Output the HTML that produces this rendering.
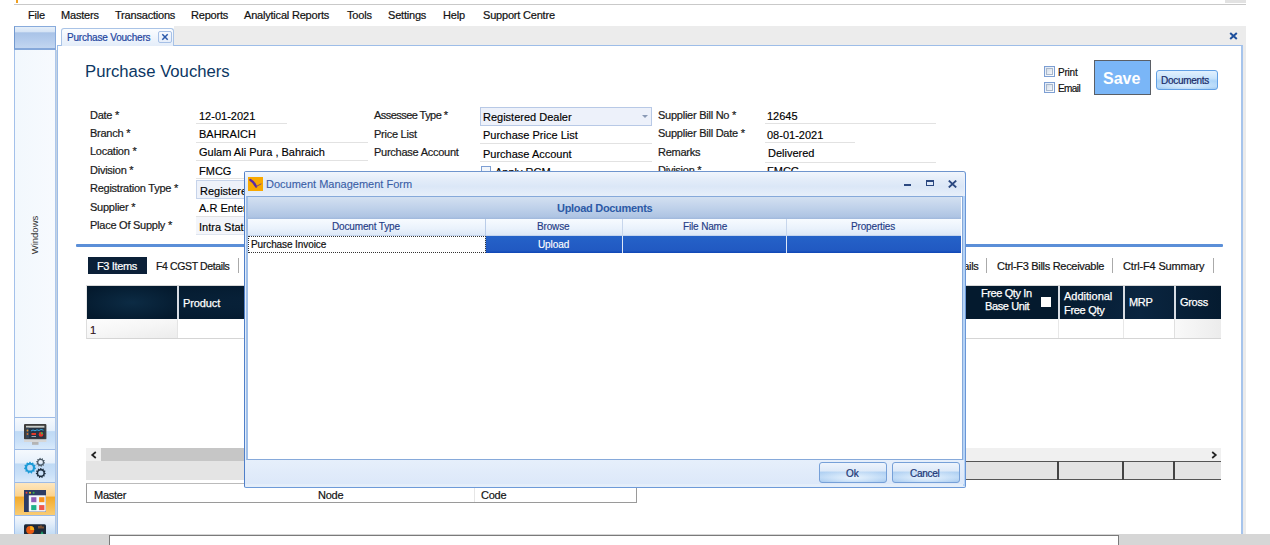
<!DOCTYPE html>
<html><head><meta charset="utf-8">
<style>
*{margin:0;padding:0;box-sizing:border-box}
html,body{width:1270px;height:545px;overflow:hidden;background:#fff}
body{position:relative;font-family:"Liberation Sans",sans-serif;color:#111}
.a{position:absolute;white-space:nowrap}
.t{position:absolute;white-space:nowrap;font-size:11px;line-height:13px}
.menu{font-size:11px;letter-spacing:-0.2px;color:#111;line-height:13px;top:9px;-webkit-text-stroke:0.2px #111}
.lbl{font-size:11px;letter-spacing:-0.25px;color:#1a1a1a;line-height:13px;margin-top:1px;-webkit-text-stroke:0.2px #1a1a1a}
.val{font-size:11px;color:#000;line-height:13px;margin-top:1px;-webkit-text-stroke:0.15px #000}
.ul{position:absolute;height:1px;background:#e2e2e2}
</style></head><body>

<!-- top strip -->
<div class="a" style="left:14px;top:4px;width:1232px;height:1px;background:#c9c9c9"></div>
<div class="a" style="left:16px;top:0;width:2px;height:3px;background:#f0a020"></div>
<div class="a" style="left:1225px;top:0;width:21px;height:3px;background:#e2e2e2"></div>

<!-- menu -->
<div class="t menu" style="left:28px">File</div>
<div class="t menu" style="left:61px">Masters</div>
<div class="t menu" style="left:115px">Transactions</div>
<div class="t menu" style="left:191px">Reports</div>
<div class="t menu" style="left:244px">Analytical Reports</div>
<div class="t menu" style="left:347px">Tools</div>
<div class="t menu" style="left:388px">Settings</div>
<div class="t menu" style="left:443px">Help</div>
<div class="t menu" style="left:483px">Support Centre</div>

<!-- tab strip -->
<div class="a" style="left:174px;top:26px;width:1072px;height:20px;background:#ececec"></div>
<svg class="a" style="left:1229px;top:32px" width="9" height="8" viewBox="0 0 9 8"><path d="M1.2 1 L7.8 7 M7.8 1 L1.2 7" stroke="#1d4f9c" stroke-width="2"/></svg>

<!-- sidebar -->
<div class="a" style="left:14px;top:26px;width:42px;height:508px;background:linear-gradient(90deg,#f2f8fd,#f7fafe);border-left:1px solid #a4c1ea;border-right:1px solid #aec7ea"></div>
<div class="a" style="left:14px;top:26px;width:42px;height:24px;background:linear-gradient(#e6eff9,#d6e4f5 22%,#a9c3e7 28%,#b3cbec 60%,#c2d6f0);border:1px solid #88abdc;border-left-color:#7299d0;border-bottom:2px solid #85a8da"></div>
<div class="a" style="left:10px;top:229px;width:50px;font-size:9.5px;line-height:12px;color:#333;transform:rotate(-90deg);transform-origin:center;text-align:center">Windows</div>

<!-- content frame -->
<div class="a" style="left:57px;top:45px;width:1186px;height:489px;border:1px solid #9dbde8;border-right:2px solid #a6c4ec;border-bottom:none;background:#fff"></div>
<div class="a" style="left:1243px;top:46px;width:3px;height:488px;background:#ebebeb"></div>
<div class="a" style="left:56px;top:50px;width:1px;height:484px;background:#c5d3e2"></div>

<!-- doc tab -->
<div class="a" style="left:61px;top:28px;width:113px;height:18px;background:linear-gradient(#fbfdff,#e4edf9);border:1px solid #a9c3e6;border-bottom:none;border-radius:3px 3px 0 0"></div>
<div class="t" style="left:67px;top:31px;font-size:10px;color:#1f46a0;letter-spacing:-0.2px;-webkit-text-stroke:0.2px #1f46a0">Purchase Vouchers</div>
<div class="a" style="left:158px;top:31px;width:14px;height:12px;border:1px solid #a6c0e6;background:linear-gradient(#f6f9fe,#e6eefa);border-radius:2px"></div>
<svg class="a" style="left:158px;top:31px" width="14" height="12" viewBox="0 0 14 12"><path d="M4.3 3.3 L9.7 8.7 M9.7 3.3 L4.3 8.7" stroke="#2a58aa" stroke-width="1.5"/></svg>


<!-- title -->
<div class="a" style="left:85px;top:62px;font-size:16.7px;line-height:19px;color:#0c3763">Purchase Vouchers</div>

<!-- print/email/save/documents -->
<div class="a" style="left:1044px;top:66px;width:11px;height:11px;border:1px solid #7d9fd3;background:linear-gradient(135deg,#dfe8f5,#fff)"><div class="a" style="left:1px;top:1px;width:7px;height:7px;border:1px solid #a9b8cc;background:linear-gradient(135deg,#d5dde8,#f4f7fb)"></div></div>
<div class="t" style="left:1058px;top:66px;font-size:10px;letter-spacing:-0.2px;color:#111;-webkit-text-stroke:0.2px #111">Print</div>
<div class="a" style="left:1044px;top:82px;width:11px;height:11px;border:1px solid #7d9fd3;background:linear-gradient(135deg,#dfe8f5,#fff)"><div class="a" style="left:1px;top:1px;width:7px;height:7px;border:1px solid #a9b8cc;background:linear-gradient(135deg,#d5dde8,#f4f7fb)"></div></div>
<div class="t" style="left:1058px;top:82px;font-size:10px;letter-spacing:-0.6px;color:#111;-webkit-text-stroke:0.2px #111">Email</div>
<div class="a" style="left:1094px;top:60px;width:57px;height:35px;background:#7ab6f7;border:1px solid #5a5f66"></div>
<div class="a" style="left:1103px;top:69px;font-size:16px;line-height:19px;font-weight:bold;color:#fff">Save</div>
<div class="a" style="left:1156px;top:70px;width:62px;height:20px;border:1px solid #62a0e4;border-radius:3px;background:radial-gradient(ellipse 55% 40% at 50% 80%,rgba(230,245,255,0.8),rgba(230,245,255,0)),linear-gradient(#e2f1fe,#c9e4fc 40%,#acd4f8 55%,#b4d8f9 85%,#9dcaf3)"></div>
<div class="t" style="left:1161px;top:74px;font-size:10px;letter-spacing:-0.3px;color:#1a2a66;-webkit-text-stroke:0.2px #1a2a66">Documents</div>

<!-- labels col1 -->
<div class="t lbl" style="left:90px;top:108px">Date *</div>
<div class="t lbl" style="left:90px;top:126px">Branch *</div>
<div class="t lbl" style="left:90px;top:144px">Location *</div>
<div class="t lbl" style="left:90px;top:163px">Division *</div>
<div class="t lbl" style="left:90px;top:181px">Registration Type *</div>
<div class="t lbl" style="left:90px;top:200px">Supplier *</div>
<div class="t lbl" style="left:90px;top:218px">Place Of Supply *</div>

<!-- values col1 -->
<div class="t val" style="left:199px;top:109px">12-01-2021</div>
<div class="ul" style="left:196px;top:123px;width:91px"></div>
<div class="t val" style="left:199px;top:127px">BAHRAICH</div>
<div class="ul" style="left:196px;top:142px;width:172px"></div>
<div class="t val" style="left:199px;top:145px">Gulam Ali Pura , Bahraich</div>
<div class="ul" style="left:196px;top:160px;width:172px"></div>
<div class="t val" style="left:199px;top:164px">FMCG</div>
<div class="ul" style="left:196px;top:178px;width:172px"></div>
<div class="a" style="left:196px;top:180px;width:172px;height:19px;background:#eef2fa;border:1px solid #c6d3ea"></div>
<div class="t val" style="left:200px;top:184px">Registered Dealer</div>
<div class="t val" style="left:199px;top:201px">A.R Enterprises</div>
<div class="ul" style="left:196px;top:216px;width:172px"></div>
<div class="a" style="left:196px;top:217px;width:172px;height:18px;background:#f3f5fa;border-bottom:1px solid #dfe5ef"></div>
<div class="t val" style="left:199px;top:220px">Intra State</div>

<!-- labels col2 -->
<div class="t lbl" style="left:374px;top:108px;letter-spacing:-0.55px">Assessee Type *</div>
<div class="t lbl" style="left:374px;top:127px">Price List</div>
<div class="t lbl" style="left:374px;top:145px">Purchase Account</div>

<!-- values col2 -->
<div class="a" style="left:480px;top:107px;width:172px;height:19px;background:#edf1fa;border:1px solid #b8c9e6"></div>
<div class="t val" style="left:483px;top:110px">Registered Dealer</div>
<div class="a" style="left:642px;top:115px;width:0;height:0;border-left:3px solid transparent;border-right:3px solid transparent;border-top:3px solid #8a9ab5"></div>
<div class="t val" style="left:483px;top:128px">Purchase Price List</div>
<div class="ul" style="left:480px;top:143px;width:172px"></div>
<div class="t val" style="left:483px;top:147px">Purchase Account</div>
<div class="ul" style="left:480px;top:161px;width:172px"></div>
<div class="a" style="left:481px;top:166px;width:10px;height:10px;border:1px solid #7d9fd3;background:#f2f6fb"></div>
<div class="t val" style="left:495px;top:165px">Apply RCM</div>

<!-- labels col3 -->
<div class="t lbl" style="left:658px;top:108px">Supplier Bill No *</div>
<div class="t lbl" style="left:658px;top:126px">Supplier Bill Date *</div>
<div class="t lbl" style="left:658px;top:145px">Remarks</div>
<div class="t lbl" style="left:658px;top:163px">Division *</div>

<!-- values col3 -->
<div class="t val" style="left:767px;top:109px">12645</div>
<div class="ul" style="left:765px;top:123px;width:171px"></div>
<div class="t val" style="left:767px;top:128px">08-01-2021</div>
<div class="ul" style="left:765px;top:142px;width:90px"></div>
<div class="t val" style="left:768px;top:146px">Delivered</div>
<div class="ul" style="left:765px;top:162px;width:171px"></div>
<div class="t val" style="left:767px;top:164px">FMCG</div>

<!-- blue separator -->
<div class="a" style="left:76px;top:244px;width:1147px;height:3px;background:#5b8fd8;border-radius:1px"></div>

<!-- tabs row -->
<div class="a" style="left:88px;top:257px;width:59px;height:17px;background:#0b2038"></div>
<div class="t" style="left:97px;top:260px;font-size:11px;letter-spacing:-0.35px;color:#fff;-webkit-text-stroke:0.2px #fff">F3 Items</div>
<div class="t lbl" style="left:156px;top:259px;font-size:10.5px;letter-spacing:-0.38px;color:#111">F4 CGST Details</div>
<div class="a" style="left:238px;top:258px;width:1px;height:15px;background:#aaa"></div>
<div class="t lbl" style="left:947px;top:259px;color:#111;letter-spacing:-0.3px">Details</div>
<div class="a" style="left:986px;top:258px;width:1px;height:15px;background:#aaa"></div>
<div class="t lbl" style="left:997px;top:259px;letter-spacing:-0.3px;color:#111">Ctrl-F3 Bills Receivable</div>
<div class="a" style="left:1112px;top:258px;width:1px;height:15px;background:#aaa"></div>
<div class="t lbl" style="left:1123px;top:259px;letter-spacing:-0.16px;color:#111">Ctrl-F4 Summary</div>
<div class="a" style="left:1213px;top:258px;width:1px;height:15px;background:#aaa"></div>

<!-- grid header -->
<div class="a" style="left:86px;top:285px;width:1135px;height:34px;background:#041a2e;border-top:1px solid #d8d8d8;border-left:1px solid #e6e6e6"></div>
<div class="a" style="left:87px;top:286px;width:90px;height:33px;background:radial-gradient(ellipse 60% 60% at 50% 50%,#0c2b44,#041a2e)"></div>
<div class="a" style="left:179px;top:286px;width:879px;height:33px;background:radial-gradient(ellipse 50% 70% at 30% 50%,#0a2640,#041a2e)"></div>
<div class="a" style="left:1060px;top:286px;width:161px;height:33px;background:linear-gradient(90deg,#051b30,#0a2540 50%,#051b30)"></div>
<div class="a" style="left:177px;top:286px;width:2px;height:33px;background:#d8dde4"></div>
<div class="a" style="left:1058px;top:286px;width:2px;height:33px;background:#d8dde4"></div>
<div class="a" style="left:1123px;top:286px;width:2px;height:33px;background:#d8dde4"></div>
<div class="a" style="left:1174px;top:286px;width:2px;height:33px;background:#d8dde4"></div>
<div class="t" style="left:183px;top:297px;font-size:11px;letter-spacing:-0.1px;color:#fff;-webkit-text-stroke:0.25px #fff">Product</div>
<div class="t" style="left:981px;top:287px;font-size:11px;letter-spacing:-0.4px;color:#fff;-webkit-text-stroke:0.25px #fff">Free Qty In</div>
<div class="t" style="left:985px;top:300px;font-size:11px;letter-spacing:-0.4px;color:#fff;-webkit-text-stroke:0.25px #fff">Base Unit</div>
<div class="a" style="left:1041px;top:297px;width:10px;height:10px;background:#fff"></div>
<div class="t" style="left:1064px;top:290px;font-size:11px;letter-spacing:0px;color:#fff;-webkit-text-stroke:0.25px #fff">Additional</div>
<div class="t" style="left:1064px;top:304px;font-size:11px;letter-spacing:-0.3px;color:#fff;-webkit-text-stroke:0.25px #fff">Free Qty</div>
<div class="t" style="left:1129px;top:296px;font-size:11px;letter-spacing:-0.3px;color:#fff;-webkit-text-stroke:0.25px #fff">MRP</div>
<div class="t" style="left:1180px;top:296px;font-size:11px;letter-spacing:-0.3px;color:#fff;-webkit-text-stroke:0.25px #fff">Gross</div>

<!-- grid row -->
<div class="a" style="left:86px;top:319px;width:1135px;height:20px;border-bottom:1px solid #d5d5d5;border-left:1px solid #ddd"></div>
<div class="a" style="left:87px;top:319px;width:90px;height:19px;background:linear-gradient(170deg,#fdfdfd,#f6f6f6 50%,#ececec)"></div>
<div class="a" style="left:177px;top:319px;width:1px;height:19px;background:#e4e4e4"></div>
<div class="a" style="left:1058px;top:319px;width:1px;height:19px;background:#e8e8e8"></div>
<div class="a" style="left:1123px;top:319px;width:1px;height:19px;background:#e8e8e8"></div>
<div class="a" style="left:1174px;top:319px;width:47px;height:19px;background:linear-gradient(90deg,#f9f9f9,#ececec);border-left:1px solid #e0e0e0"></div>
<div class="t val" style="left:90px;top:323px;color:#3a1424">1</div>

<!-- scrollbar -->
<div class="a" style="left:86px;top:448px;width:1135px;height:13px;background:#f0f0f0"></div>
<div class="a" style="left:101px;top:448px;width:860px;height:13px;background:#c6c6c6"></div>
<svg class="a" style="left:90px;top:451px" width="8" height="8" viewBox="0 0 8 8"><path d="M5.8 1 L2.2 4 L5.8 7" fill="none" stroke="#222" stroke-width="1.7"/></svg>
<svg class="a" style="left:1210px;top:451px" width="8" height="8" viewBox="0 0 8 8"><path d="M2.2 1 L5.8 4 L2.2 7" fill="none" stroke="#222" stroke-width="1.7"/></svg>

<!-- footer row -->
<div class="a" style="left:86px;top:461px;width:1135px;height:19px;background:#e4e4e4"></div>
<div class="a" style="left:965px;top:461px;width:256px;height:19px;border-top:1px solid #555;border-bottom:1px solid #555"></div>
<div class="a" style="left:1057px;top:461px;width:2px;height:19px;background:#444"></div>
<div class="a" style="left:1122px;top:461px;width:2px;height:19px;background:#444"></div>
<div class="a" style="left:1173px;top:461px;width:2px;height:19px;background:#444"></div>

<!-- master/node/code -->
<div class="a" style="left:86px;top:483px;width:551px;height:20px;background:#fff;border:1px solid #9a9a9a;border-top-color:#bbb"></div>
<div class="t lbl" style="left:94px;top:488px;color:#111">Master</div>
<div class="t lbl" style="left:318px;top:488px;color:#111">Node</div>
<div class="a" style="left:474px;top:484px;width:1px;height:18px;background:#e6e6e6"></div>
<div class="t lbl" style="left:481px;top:488px;color:#111">Code</div>


<!-- ===== dialog ===== -->
<div class="a" style="left:244px;top:171px;width:722px;height:317px;border:1px solid #6f95cd;border-left-color:#4f7fc9;border-right-color:#6a96d6;border-bottom-color:#6d9ad8;border-radius:2px 3px 2px 2px;background:linear-gradient(#eaf1fb,#dfeaf8 35%,#e4eefa 100%)"></div>
<div class="a" style="left:245px;top:172px;width:719px;height:24px;background:linear-gradient(#f1f6fd,#e4edf9 30%,#dbe7f7 60%,#e7effa)"></div>
<!-- icon -->
<div class="a" style="left:248px;top:177px;width:15px;height:14px;background:#f8a800"></div>
<svg class="a" style="left:248px;top:176px" width="15" height="15" viewBox="0 0 15 15"><path d="M2.4 3.9 Q6 5.8 8.1 10.6" fill="none" stroke="#5a2aa8" stroke-width="2.3" stroke-linecap="round"/><path d="M8.3 10.4 L13 8" fill="none" stroke="#7d4a78" stroke-width="1" stroke-linecap="round"/></svg>
<div class="t" style="left:266px;top:178px;font-size:11px;line-height:13px;color:#3a5ea6;-webkit-text-stroke:0.1px #3a5ea6">Document Management Form</div>
<!-- title buttons -->
<div class="a" style="left:904px;top:184px;width:7px;height:2px;background:#2b4880"></div>
<div class="a" style="left:926px;top:180px;width:8px;height:6px;border:1px solid #2b4880;border-top-width:2px"></div>
<svg class="a" style="left:948px;top:180px" width="9" height="8" viewBox="0 0 9 8"><path d="M0.8 0.6 L8.2 7.4 M8.2 0.6 L0.8 7.4" stroke="#2b4880" stroke-width="1.9"/></svg>

<!-- inner frame -->
<div class="a" style="left:963px;top:196px;width:2px;height:290px;background:#b5d3f6"></div>
<div class="a" style="left:246px;top:196px;width:717px;height:264px;border:1px solid #86a9da;border-left:2px solid #a0bfe8;background:#fff"></div>
<!-- group band -->
<div class="a" style="left:248px;top:197px;width:713px;height:22px;background:linear-gradient(#d3e0f1,#bfd1ea 50%,#aec4e3 90%,#9fb8dc)"></div>
<div class="t" style="left:557px;top:202px;font-size:11px;line-height:13px;font-weight:bold;letter-spacing:-0.3px;color:#2c5aa6">Upload Documents</div>
<!-- col header -->
<div class="a" style="left:248px;top:219px;width:713px;height:17px;background:linear-gradient(#f7fbff,#eaf2fc 60%,#dde8f7);border-bottom:1px solid #c4d5ee"></div>
<div class="a" style="left:485px;top:219px;width:1px;height:34px;background:#b9cce8"></div>
<div class="a" style="left:622px;top:219px;width:1px;height:34px;background:#c7d6ec"></div>
<div class="a" style="left:786px;top:219px;width:1px;height:34px;background:#c7d6ec"></div>
<div class="t" style="left:332px;top:220px;font-size:10px;line-height:13px;letter-spacing:-0.15px;color:#243c86;-webkit-text-stroke:0.15px #243c86">Document Type</div>
<div class="t" style="left:537px;top:220px;font-size:10px;line-height:13px;letter-spacing:-0.15px;color:#243c86;-webkit-text-stroke:0.15px #243c86">Browse</div>
<div class="t" style="left:683px;top:220px;font-size:10px;line-height:13px;letter-spacing:-0.15px;color:#243c86;-webkit-text-stroke:0.15px #243c86">File Name</div>
<div class="t" style="left:851px;top:220px;font-size:10px;line-height:13px;letter-spacing:-0.15px;color:#243c86;-webkit-text-stroke:0.15px #243c86">Properties</div>
<!-- row -->
<div class="a" style="left:486px;top:236px;width:475px;height:17px;background:linear-gradient(#2562c8,#2159c2 85%,#0f46b5)"></div>
<div class="a" style="left:622px;top:236px;width:1px;height:17px;background:#dfe8f7"></div>
<div class="a" style="left:786px;top:236px;width:1px;height:17px;background:#dfe8f7"></div>
<div class="a" style="left:248px;top:236px;width:238px;height:17px;border:1px dotted #333"></div>
<div class="t" style="left:251px;top:238px;font-size:10px;line-height:13px;letter-spacing:-0.1px;color:#111;-webkit-text-stroke:0.2px #111">Purchase Invoice</div>
<div class="t" style="left:538px;top:238px;font-size:10px;line-height:13px;letter-spacing:-0.1px;color:#fff;-webkit-text-stroke:0.15px #fff">Upload</div>

<!-- bottom panel -->
<div class="a" style="left:245px;top:460px;width:719px;height:24px;background:linear-gradient(#e6effb,#dce8f9)"></div>
<div class="a" style="left:819px;top:462px;width:68px;height:21px;border:1px solid #76a0d8;border-radius:3px;background:radial-gradient(ellipse 60% 45% at 50% 78%,rgba(240,248,255,0.85),rgba(240,248,255,0) 100%),linear-gradient(#eef4fc,#dde9f8 42%,#b0d0f2 48%,#b8d6f5 75%,#a4c8ee)"></div>
<div class="t" style="left:846px;top:467px;font-size:10px;line-height:13px;color:#1c3674;-webkit-text-stroke:0.2px #1c3674">Ok</div>
<div class="a" style="left:892px;top:462px;width:68px;height:21px;border:1px solid #76a0d8;border-radius:3px;background:radial-gradient(ellipse 60% 45% at 50% 78%,rgba(240,248,255,0.85),rgba(240,248,255,0) 100%),linear-gradient(#eef4fc,#dde9f8 42%,#b0d0f2 48%,#b8d6f5 75%,#a4c8ee)"></div>
<div class="t" style="left:910px;top:467px;font-size:10px;line-height:13px;letter-spacing:-0.3px;color:#1c3674;-webkit-text-stroke:0.2px #1c3674">Cancel</div>

<!-- sidebar buttons -->
<div class="a" style="left:15px;top:417px;width:40px;height:33px;background:linear-gradient(#f5f9fd,#e6f0fb 40%,#bfdaf5 44%,#c9e0f8 75%,#d9eafb);border-top:1px solid #9dbbe6;border-bottom:1px solid #9dbbe6"></div>
<div class="a" style="left:15px;top:450px;width:40px;height:33px;background:linear-gradient(#f5f9fd,#e6f0fb 40%,#bfdaf5 44%,#c9e0f8 75%,#d9eafb);border-bottom:1px solid #9dbbe6"></div>
<div class="a" style="left:15px;top:483px;width:40px;height:33px;background:linear-gradient(#fde7c0,#fcd38e 40%,#f3ab2c 45%,#f9cc74);border-bottom:1px solid #9dbbe6"></div>
<div class="a" style="left:15px;top:516px;width:40px;height:18px;background:linear-gradient(#f3f7fc,#e3eefa 40%,#c3dcf5)"></div>


<!-- sidebar icons -->
<svg class="a" style="left:14px;top:417px" width="43" height="117" viewBox="14 417 43 117">
 <!-- monitor -->
 <rect x="24" y="424" width="22.4" height="15.5" rx="1" fill="#3d3d3d"/>
 <rect x="26" y="425.8" width="18.4" height="2" fill="#c9ccc8"/>
 <rect x="26" y="427.8" width="18.4" height="10.4" fill="#243446"/>
 <rect x="26" y="427.8" width="3" height="10.4" fill="#34465a"/>
 <circle cx="27.5" cy="430.5" r="0.9" fill="#e8942a"/>
 <circle cx="27.5" cy="434" r="0.9" fill="#d9702a"/>
 <path d="M31 431 L33 430 L35 430.8 L37 429.8 L39 430.5 L41 429.5 L43.5 430.2" stroke="#3aa6e0" stroke-width="1" fill="none"/>
 <rect x="31.5" y="433" width="4.5" height="2" fill="#e33a2a"/>
 <rect x="31.5" y="436" width="4.5" height="1" fill="#9aa4b0"/>
 <circle cx="41" cy="434.4" r="2.3" fill="#e8352a"/>
 <path d="M41 434.4 L41 432.1 A2.3 2.3 0 0 1 43.2 433.7 Z" fill="#49b04a"/>
 <rect x="24" y="439.4" width="22.4" height="2.6" fill="#d6d6d6"/>
 <rect x="32" y="442" width="6.5" height="2.8" fill="#b4b4b4"/>
 <!-- gears -->
 <path d="M35.88 468.12 L35.77 468.95 L34.59 469.41 L34.30 470.05 L34.72 471.24 L34.17 471.87 L32.94 471.62 L32.35 472.00 L32.06 473.23 L31.25 473.47 L30.35 472.59 L29.65 472.59 L28.75 473.47 L27.94 473.23 L27.65 472.00 L27.06 471.62 L25.83 471.87 L25.28 471.24 L25.70 470.05 L25.41 469.41 L24.23 468.95 L24.12 468.12 L25.11 467.35 L25.21 466.66 L24.47 465.64 L24.82 464.87 L26.08 464.76 L26.54 464.24 L26.46 462.98 L27.17 462.52 L28.29 463.11 L28.96 462.91 L29.58 461.82 L30.42 461.82 L31.04 462.91 L31.71 463.11 L32.83 462.52 L33.54 462.98 L33.46 464.24 L33.92 464.76 L35.18 464.87 L35.53 465.64 L34.79 466.66 L34.89 467.35 Z M32.90 467.70 A2.9 2.9 0 1 0 27.10 467.70 A2.9 2.9 0 1 0 32.90 467.70 Z" fill="#1b9ad6" fill-rule="evenodd"/><path d="M45.09 462.65 L44.98 463.35 L43.83 463.64 L43.58 464.13 L44.02 465.22 L43.52 465.72 L42.43 465.28 L41.94 465.53 L41.65 466.68 L40.95 466.79 L40.33 465.79 L39.78 465.70 L38.88 466.46 L38.25 466.14 L38.33 464.96 L37.94 464.57 L36.76 464.65 L36.44 464.02 L37.20 463.12 L37.11 462.57 L36.11 461.95 L36.22 461.25 L37.37 460.96 L37.62 460.47 L37.18 459.38 L37.68 458.88 L38.77 459.32 L39.26 459.07 L39.55 457.92 L40.25 457.81 L40.87 458.81 L41.42 458.90 L42.32 458.14 L42.95 458.46 L42.87 459.64 L43.26 460.03 L44.44 459.95 L44.76 460.58 L44.00 461.48 L44.09 462.03 Z M42.90 462.30 A2.3 2.3 0 1 0 38.30 462.30 A2.3 2.3 0 1 0 42.90 462.30 Z" fill="#4b5a67" fill-rule="evenodd"/><path d="M45.79 473.36 L45.69 474.06 L44.55 474.40 L44.31 474.92 L44.80 476.00 L44.34 476.54 L43.20 476.20 L42.72 476.51 L42.55 477.68 L41.86 477.89 L41.09 476.99 L40.51 476.99 L39.74 477.89 L39.05 477.68 L38.88 476.51 L38.40 476.20 L37.26 476.54 L36.80 476.00 L37.29 474.92 L37.05 474.40 L35.91 474.06 L35.81 473.36 L36.81 472.71 L36.89 472.15 L36.12 471.25 L36.41 470.60 L37.60 470.60 L37.97 470.17 L37.80 469.00 L38.40 468.61 L39.40 469.25 L39.95 469.09 L40.44 468.01 L41.16 468.01 L41.65 469.09 L42.20 469.25 L43.20 468.61 L43.80 469.00 L43.63 470.17 L44.00 470.60 L45.19 470.60 L45.48 471.25 L44.71 472.15 L44.79 472.71 Z M43.40 473.00 A2.6 2.6 0 1 0 38.20 473.00 A2.6 2.6 0 1 0 43.40 473.00 Z" fill="#1c2d3e" fill-rule="evenodd"/>
 <!-- dashboard -->
 <rect x="24" y="490" width="22" height="22" fill="#2d3c64"/>
 <rect x="28.8" y="495.3" width="17" height="16.4" fill="#f4f8fc"/>
 <circle cx="26.5" cy="492.8" r="1" fill="#e8453c"/>
 <circle cx="30" cy="492.8" r="1" fill="#f2c81a"/>
 <circle cx="33.6" cy="492.8" r="1" fill="#3bb34a"/>
 <rect x="31.2" y="497.2" width="5.2" height="5" fill="#8f5db8"/>
 <rect x="39.1" y="497.2" width="5.3" height="5" fill="#f7901e"/>
 <rect x="31.2" y="505.1" width="5.2" height="5" fill="#1fb088"/>
 <rect x="39.1" y="505.1" width="5.3" height="5" fill="#ee564c"/>
 <!-- 4th -->
 <rect x="24" y="524.2" width="22" height="12" rx="1.5" fill="#1d2a3a"/>
 <circle cx="30.2" cy="530" r="4" fill="#e85a12"/>
 <path d="M30.2 530 L30.2 526 A4 4 0 0 1 34.2 530 Z" fill="#f7b21a"/>
 <rect x="38.5" y="526" width="1" height="2.5" fill="#d8762a"/>
 <rect x="40.5" y="525.5" width="1" height="3" fill="#d8762a"/>
 <rect x="42.5" y="526.5" width="1" height="2" fill="#d8762a"/>
 <path d="M40.5 534 L42 531 L43.5 534 Z" fill="#1e9e6a"/>
</svg>

<!-- bottom status bar -->
<div class="a" style="left:0;top:534px;width:1270px;height:11px;background:#d6d6d6"></div>
<div class="a" style="left:109px;top:535px;width:1010px;height:10px;background:#fff;border:1px solid #7a7a7a;border-bottom:none"></div>

</body></html>
